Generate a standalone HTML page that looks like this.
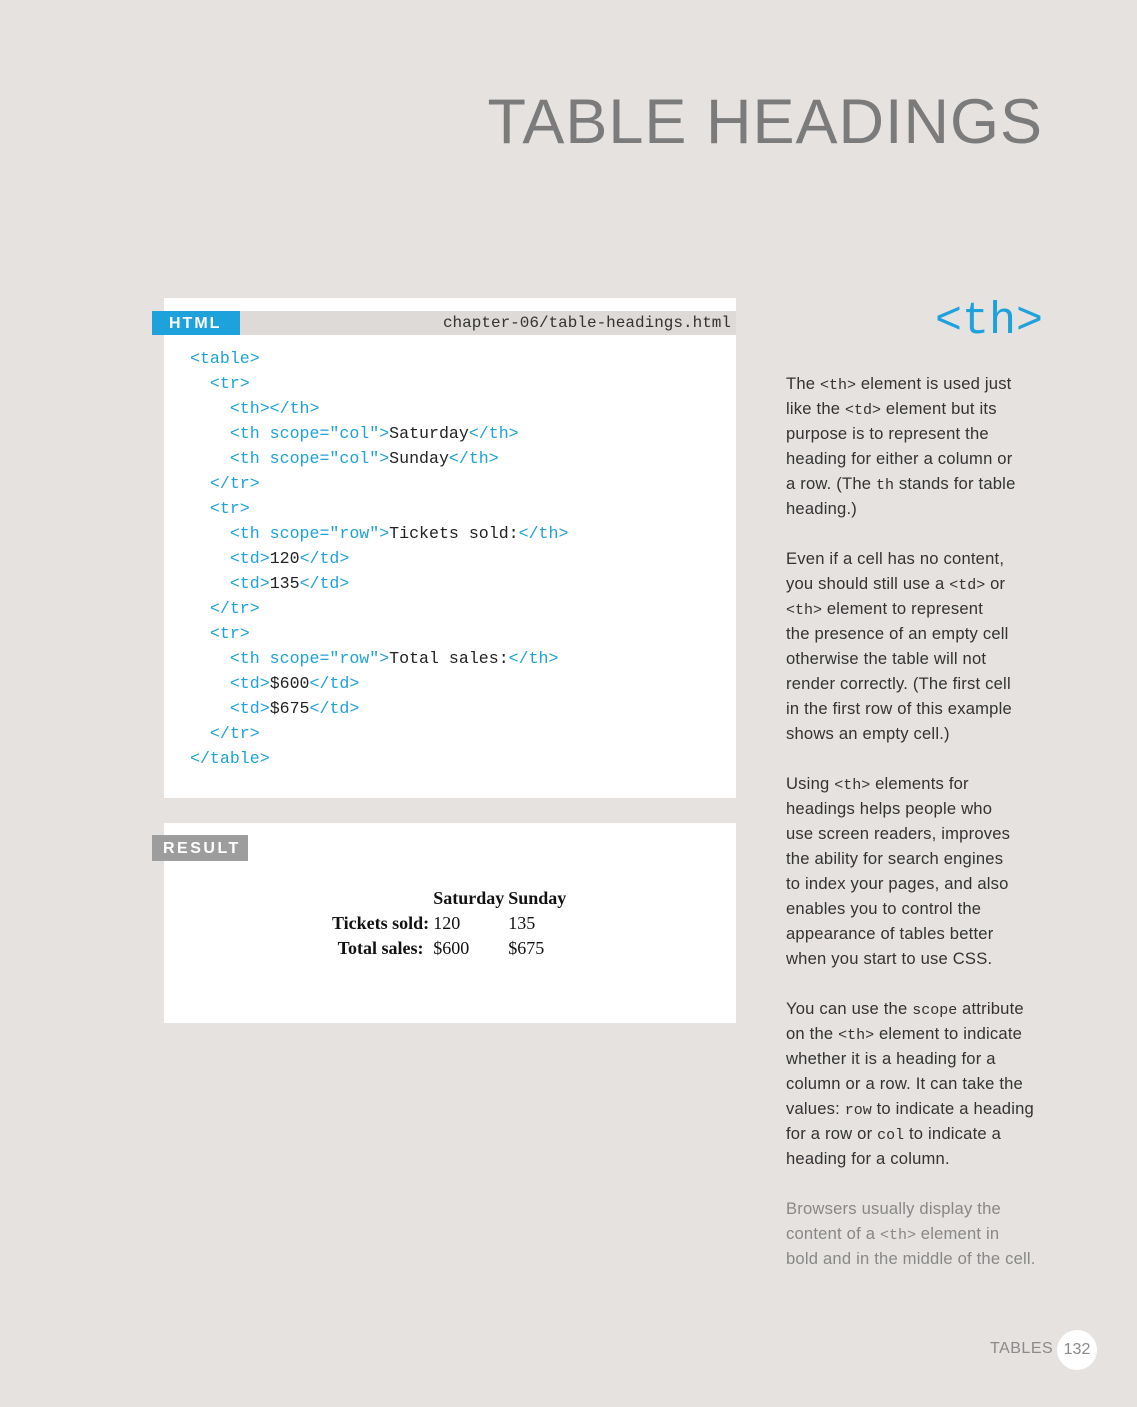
<!DOCTYPE html>
<html><head><meta charset="utf-8"><style>
body{margin:0;background:#e5e2df;width:1137px;height:1407px;position:relative;overflow:hidden;font-family:"Liberation Sans",sans-serif}
.abs{position:absolute}
h1{position:absolute;margin:0;right:94px;top:84px;font-weight:normal;font-size:63px;color:#7b7b7b;letter-spacing:1px;line-height:76px;white-space:nowrap}
.panel{position:absolute;background:#fff;left:164px;width:572px}
.code{position:absolute;left:190px;top:346px;font-family:"Liberation Mono",monospace;font-size:16.6px;line-height:25px;color:#222;white-space:pre}
.code b{font-weight:normal;color:#1ea2d8}
.side{position:absolute;left:786px;font-size:16.6px;line-height:25px;color:#333;white-space:pre;letter-spacing:0.2px}
.side code{font-family:"Liberation Mono",monospace;font-size:15px;line-height:0;letter-spacing:0}
.res{position:absolute;left:330px;top:886px;font-family:"Liberation Serif",serif;font-size:18px;line-height:25px;color:#111;border-collapse:collapse}
.res td,.res th{padding:0 2px;text-align:left}
</style></head><body>
<h1>TABLE HEADINGS</h1>
<div class="panel" style="top:298px;height:500px"></div>
<div class="abs" style="left:164px;top:311px;width:572px;height:24px;background:#dedad7"></div>
<div class="abs" style="left:152px;top:311px;width:88px;height:24px;background:#1ea2dc;color:#fff;font-size:16px;font-weight:bold;letter-spacing:2px;line-height:25px;text-indent:17px">HTML</div>
<div class="abs" style="right:406px;top:311px;font-family:'Liberation Mono',monospace;font-size:16px;line-height:25px;color:#333">chapter-06/table-headings.html</div>
<div class="code"><b>&lt;table&gt;</b>
  <b>&lt;tr&gt;</b>
    <b>&lt;th&gt;&lt;/th&gt;</b>
    <b>&lt;th scope="col"&gt;</b>Saturday<b>&lt;/th&gt;</b>
    <b>&lt;th scope="col"&gt;</b>Sunday<b>&lt;/th&gt;</b>
  <b>&lt;/tr&gt;</b>
  <b>&lt;tr&gt;</b>
    <b>&lt;th scope="row"&gt;</b>Tickets sold:<b>&lt;/th&gt;</b>
    <b>&lt;td&gt;</b>120<b>&lt;/td&gt;</b>
    <b>&lt;td&gt;</b>135<b>&lt;/td&gt;</b>
  <b>&lt;/tr&gt;</b>
  <b>&lt;tr&gt;</b>
    <b>&lt;th scope="row"&gt;</b>Total sales:<b>&lt;/th&gt;</b>
    <b>&lt;td&gt;</b>$600<b>&lt;/td&gt;</b>
    <b>&lt;td&gt;</b>$675<b>&lt;/td&gt;</b>
  <b>&lt;/tr&gt;</b>
<b>&lt;/table&gt;</b></div>
<div class="panel" style="top:823px;height:200px"></div>
<div class="abs" style="left:152px;top:835px;width:96px;height:26px;background:#9d9d9d;color:#fff;font-size:16px;font-weight:bold;letter-spacing:2.5px;line-height:27px;text-indent:11px">RESULT</div>
<table class="res">
<tr><th></th><th>Saturday</th><th>Sunday</th></tr>
<tr><th>Tickets sold:</th><td>120</td><td>135</td></tr>
<tr><th style="text-align:center">Total sales:</th><td>$600</td><td>$675</td></tr>
</table>
<div class="abs" style="right:94px;top:294px;font-family:'Liberation Mono',monospace;font-size:45px;line-height:56px;color:#1ea2dc">&lt;th&gt;</div>
<div class="side" style="top:371px">The <code>&lt;th&gt;</code> element is used just
like the <code>&lt;td&gt;</code> element but its
purpose is to represent the
heading for either a column or
a row. (The <code>th</code> stands for table
heading.)

Even if a cell has no content,
you should still use a <code>&lt;td&gt;</code> or
<code>&lt;th&gt;</code> element to represent
the presence of an empty cell
otherwise the table will not
render correctly. (The first cell
in the first row of this example
shows an empty cell.)

Using <code>&lt;th&gt;</code> elements for
headings helps people who
use screen readers, improves
the ability for search engines
to index your pages, and also
enables you to control the
appearance of tables better
when you start to use CSS.

You can use the <code>scope</code> attribute
on the <code>&lt;th&gt;</code> element to indicate
whether it is a heading for a
column or a row. It can take the
values: <code>row</code> to indicate a heading
for a row or <code>col</code> to indicate a
heading for a column.</div>
<div class="side" style="top:1196px;color:#888">Browsers usually display the
content of a <code>&lt;th&gt;</code> element in
bold and in the middle of the cell.</div>
<div class="abs" style="left:990px;top:1340px;font-size:16px;color:#8a8a8a;letter-spacing:0.5px">TABLES</div>
<div class="abs" style="left:1057px;top:1330px;width:40px;height:40px;border-radius:50%;background:#fff;color:#888;font-size:16px;line-height:40px;text-align:center">132</div>
</body></html>
